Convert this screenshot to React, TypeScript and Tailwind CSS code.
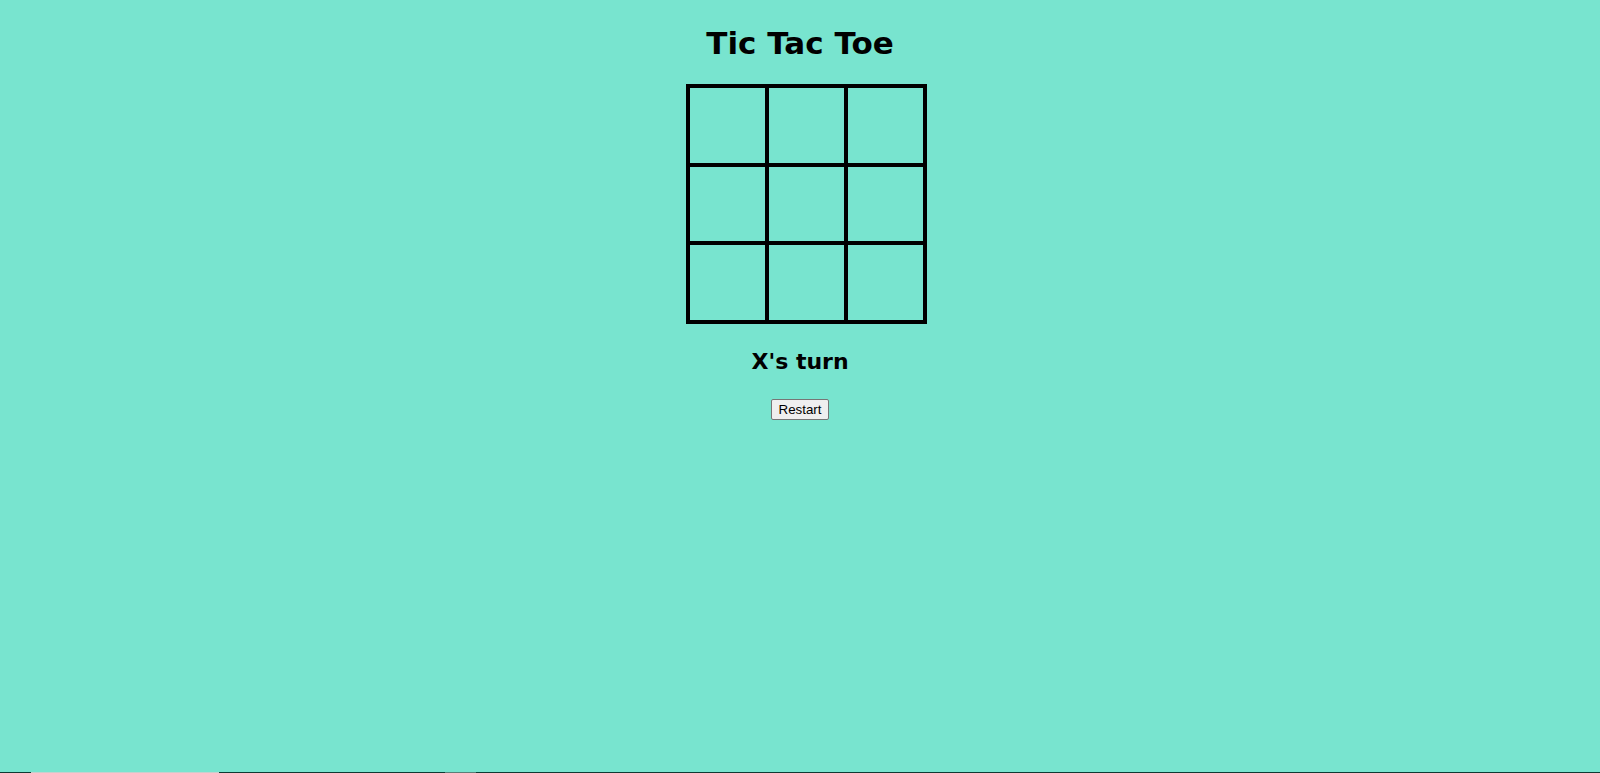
import React, { useState } from 'react'

type Cell = 'X' | 'O' | null

const font = "font-['Comic_Sans_MS','DejaVu_Sans',sans-serif]"

export default function App() {
  const [cells, setCells] = useState<Cell[]>(Array(9).fill(null))
  const [turn, setTurn] = useState<'X' | 'O'>('X')

  const play = (i: number) => {
    if (cells[i]) return
    const next = [...cells]
    next[i] = turn
    setCells(next)
    setTurn(turn === 'X' ? 'O' : 'X')
  }

  const restart = () => {
    setCells(Array(9).fill(null))
    setTurn('X')
  }

  return (
    <div className={`min-h-screen flex flex-col bg-[#78e4cf] text-black ${font}`}>
      <div className="flex flex-col items-center">
        <h1 className="mt-[25px] text-[31px] leading-[37px] font-bold">Tic Tac Toe</h1>

        {/* Board */}
        <div className="mt-[22px] ml-[13px] grid grid-cols-3 border-2 border-black">
          {cells.map((c, i) => (
            <div
              key={i}
              onClick={() => play(i)}
              className="w-[79px] h-[78.67px] border-2 border-black flex items-center justify-center text-4xl font-bold cursor-pointer"
            >
              {c}
            </div>
          ))}
        </div>

        <h2 className="mt-[24px] text-[22px] leading-[28px] font-bold">{turn}'s turn</h2>

        <button
          onClick={restart}
          className="mt-[23px] h-[21px] px-[7px] bg-[#efefef] border border-[#767676] rounded-[2px] text-[13.33px] leading-[17px] font-['Liberation_Sans',Arial,sans-serif]"
        >
          Restart
        </button>
      </div>

      {/* bottom edge strip */}
      <div className="mt-auto h-px flex">
        <div className="w-[31px] bg-[#0e3a33]" />
        <div className="w-[188px] bg-[#c9cfcd]" />
        <div className="w-[226px] bg-[#0e3a33]" />
        <div className="w-[31px] bg-[#5a7f78]" />
        <div className="flex-1 bg-[#0e3a33]" />
      </div>
    </div>
  )
}
